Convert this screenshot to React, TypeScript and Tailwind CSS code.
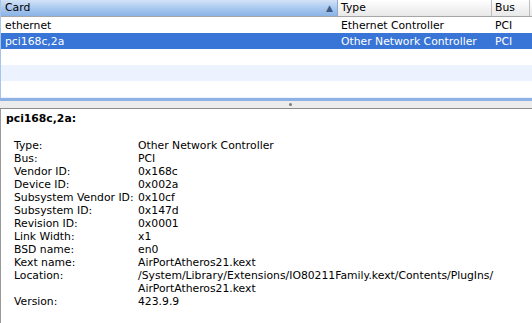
const rows = [
  { card: "ethernet", type: "Ethernet Controller", bus: "PCI", selected: false },
  { card: "pci168c,2a", type: "Other Network Controller", bus: "PCI", selected: true },
];

const details: [string, string[]][] = [
  ["Type:", ["Other Network Controller"]],
  ["Bus:", ["PCI"]],
  ["Vendor ID:", ["0x168c"]],
  ["Device ID:", ["0x002a"]],
  ["Subsystem Vendor ID:", ["0x10cf"]],
  ["Subsystem ID:", ["0x147d"]],
  ["Revision ID:", ["0x0001"]],
  ["Link Width:", ["x1"]],
  ["BSD name:", ["en0"]],
  ["Kext name:", ["AirPortAtheros21.kext"]],
  ["Location:", ["/System/Library/Extensions/IO80211Family.kext/Contents/PlugIns/", "AirPortAtheros21.kext"]],
  ["Version:", ["423.9.9"]],
];

const cols = "grid grid-cols-[337px_154px_38px_1fr]";

export default function App() {
  return (
    <div className="w-[532px] h-[323px] overflow-hidden bg-white font-['DejaVu_Sans',sans-serif] text-[10.8px] text-black flex flex-col">
      {/* table */}
      <div className="h-[98px] flex flex-col border-l border-[#a9c4ea] overflow-hidden">
        <div className={`${cols} h-[17px] border-b border-[#a6a6a6] leading-[16px]`}>
          <div className="relative pl-1 bg-gradient-to-b from-[#d3e3f7] via-[#aac9ef] to-[#8ab3e6] border-r border-[#8fa9cc]">
            Card
            <span className="absolute right-[4px] top-0 text-[9px] text-[#3d5a80]">▲</span>
          </div>
          <div className="pl-[3px] bg-gradient-to-b from-white to-[#e8e8e8] border-r border-[#bfbfbf]">Type</div>
          <div className="pl-[3px] bg-gradient-to-b from-white to-[#e8e8e8] border-r border-[#bfbfbf]">Bus</div>
          <div className="bg-gradient-to-b from-white to-[#e8e8e8]" />
        </div>
        {rows.map((r) => (
          <div
            key={r.card}
            className={`${cols} h-[16px] leading-[17px] ${r.selected ? "bg-[#3875d7] text-white" : "bg-white"}`}
          >
            <div className="pl-1">{r.card}</div>
            <div className="pl-[3px]">{r.type}</div>
            <div className="pl-[3px]">{r.bus}</div>
            <div />
          </div>
        ))}
        <div className="h-[16px] bg-white" />
        <div className="h-[16px] bg-[#edf3fe]" />
        <div className="h-[16px] bg-white" />
        <div className="flex-1 bg-[#edf3fe]" />
      </div>
      <div className="h-[3px] bg-[#8db2e3]" />
      {/* splitter */}
      <div className="h-[7px] bg-[#ececec] flex justify-center items-center">
        <div className="ml-[48px] w-[3px] h-[3px] rounded-full bg-[#7a7a7a]" />
      </div>
      <div className="h-px bg-[#8c8c8c]" />
      {/* details */}
      <div className="flex-1 border-l border-[#9a9a9a] pt-[3px] leading-[13px]">
        <div className="pl-[5px] font-bold">pci168c,2a:</div>
        <div className="mt-[14px] pl-[13px] grid grid-cols-[124px_1fr]">
          {details.map(([label, values]) => (
            <div key={label} className="contents">
              <div>{label}</div>
              <div>
                {values.map((v) => (
                  <div key={v}>{v}</div>
                ))}
              </div>
            </div>
          ))}
        </div>
      </div>
    </div>
  );
}
